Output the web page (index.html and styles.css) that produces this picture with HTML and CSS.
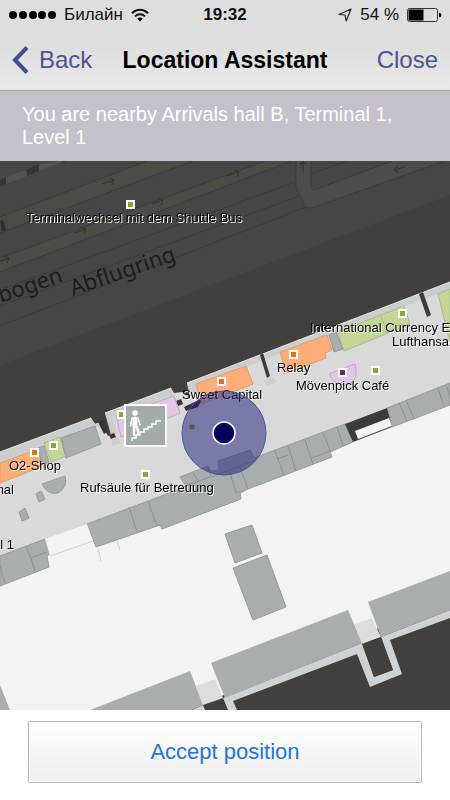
FILE: index.html
```html
<!DOCTYPE html>
<html lang="en">
<head>
  <meta charset="UTF-8">
  <title>Location Assistant</title>
  <meta name="viewport" content="width=device-width, initial-scale=1.0">
  <link rel="stylesheet" href="styles.css">
</head>
<body>
  <header class="header">
    <div class="status-bar">
      <div class="status-left">
        <svg class="signal" width="48" height="10" viewBox="0 0 48 10">
          <circle cx="5" cy="5" r="4"/>
          <circle cx="15" cy="5" r="4"/>
          <circle cx="25" cy="5" r="4"/>
          <circle cx="34" cy="5" r="4"/>
          <circle cx="44" cy="5" r="4"/>
        </svg>
        <span>Билайн</span>
        <svg class="wifi" width="18" height="14" viewBox="0 0 18 14">
          <path d="M1 5.2C5.5.6 12.5.6 17 5.2" fill="none" stroke="#111" stroke-width="2"/>
          <path d="M4 8.4C6.9 5.6 11.1 5.6 14 8.4" fill="none" stroke="#111" stroke-width="2"/>
          <path d="M6.2 10.6C7.9 9 10.1 9 11.800 10.6L9 13.4Z"/>
        </svg>
      </div>
      <div class="status-time">19:32</div>
      <div class="status-right">
        <svg width="14" height="14" viewBox="0 0 14 14">
          <path d="M13 1L1 6.5L7 7L8.2 13Z" fill="none" stroke="#222" stroke-width="1.2" stroke-linejoin="round"/>
        </svg>
        <span>54 %</span>
        <svg width="35" height="14" viewBox="0 0 35 14">
          <rect x="0.5" y="0.5" width="30" height="13" rx="2" fill="none" stroke="#333"/>
          <rect x="1.5" y="1.5" width="15" height="11"/>
          <path d="M32 4.5Q34.5 5 34.5 7T32 9.5Z"/>
        </svg>
      </div>
    </div>
    <nav class="nav-bar">
      <a class="nav-link" href="#back">
        <svg width="17" height="28" viewBox="0 0 17 28">
          <path d="M15 1.5L3 14L15 26.5" fill="none" stroke="#3f4f8f" stroke-width="4"/>
        </svg>
        Back
      </a>
      <h1>Location Assistant</h1>
      <a class="nav-link nav-close" href="#close">Close</a>
    </nav>
  </header>

  <p class="banner">You are nearby Arrivals hall B, Terminal 1, Level 1</p>

  <main class="map">
    <svg class="map-drawing" viewBox="0 161 450 549" preserveAspectRatio="xMidYMid slice">
      <!-- ground -->
      <rect y="161" width="450" height="549" fill="#42403d"/>
      <path d="M0 161H450V195L0 365Z" fill="#464646"/>

      <!-- roads -->
      <path class="lane" d="M0 217L147 161H193L0 233Z"/>
      <path class="lane" d="M0 258L265 161H292L0 272Z"/>
      <path d="M296 161V187L304 205Q307 209 312 208L445 161H392L314 190L311 187V161Z" fill="#4b4b4b"/>
      <g class="road-line">
        <path d="M0 217L147 161M0 233L193 161M0 258L265 161M0 272L292 161"/>
        <path d="M0 290L295 182M0 306L299 196M0 326L306 207"/>
        <path d="M296 161V187L304 205Q307 209 312 208L445 161"/>
        <path d="M311 161V187L314 190L392 161M311 174L347 161"/>
      </g>
      <path d="M-1 180L6 177V184L0 187ZM26 170L39 164V171L27 176ZM63 161H68L62 163Z" fill="#363636"/>
      <path d="M6 177L26 170L27 176L6 184ZM39 164L61 161L60 163L39 171Z" fill="#535353"/>
      <path d="M0 221L3 219L6 230L2 232Z" fill="#303030"/>
      <g class="arrow">
        <path d="M102 184L114 180M109 178L114 180L112 185"/>
        <path d="M152 204L163 200M158 198L163 200L161 205"/>
        <path d="M74 233L86 229M81 227L86 229L84 234"/>
        <path d="M-2 262L9 258M4 256L9 258L7 263"/>
        <path d="M227 176L239 172M234 170L239 172L237 177"/>
        <path d="M405 167L394 170M398 165L394 170L399 173"/>
        <path d="M303 172V161M300 165L303 161L307 165"/>
      </g>
      <g class="road-name">
        <text transform="translate(1 303) rotate(-19)">bogen</text>
        <text transform="translate(73 296) rotate(-19)">Abflugring</text>
      </g>

      <!-- apron -->
      <path d="M0 555L450 385V600L348 640L190 710H0Z" fill="#f3f3f3"/>

      <!-- terminal floor -->
      <path d="M0 452L91 418L95 424L100 422L108 436L112 434L105 413L171 388L174 393L182 392L190 398L187 383L450 282V400L0 572Z" fill="#d9d9d9"/>
      <path d="M0 452L91 418L95 424L100 422L103 431L97 426L0 462ZM105 413L171 388L178 412L173 415L170 396L113 417L117 434L111 435ZM187 383L450 282V289L196 386L200 394L191 398Z" fill="#cbcdce"/>
      <path d="M0 452L91 418M105 413L171 388M187 383L450 282" fill="none" stroke="#e0e1e1"/>

      <!-- passages and doors -->
      <path d="M98 422L104 419L109 431L104 434ZM109 435L114 433L116 437L111 439ZM176 401L181 399L183 404L178 406ZM184 407L203 398L198 407L186 411Z" fill="#363636"/>
      <path d="M260 355L263 353L270 376L267 378ZM419 294L423 292L431 315L427 317Z" fill="#3d3c3b"/>
      <path d="M111 440L118 437L121 443L113 446ZM264 380L273 377L277 382L267 386Z" fill="#ccd0d0"/>

      <!-- shops -->
      <g class="shop-orange">
        <path d="M0 463L38 449L43 466L0 483Z"/>
        <path d="M196 384L246 366L253 384L202 404Z"/>
        <path d="M280 352L327 335L332 350L325 353L326 358L286 373Z"/>
      </g>
      <g class="shop-green">
        <path d="M44 443L60 437L66 456L51 462Z"/>
        <path d="M337 332L404 306L410 324L344 351Z"/>
        <path d="M438 294L450 289V342Z"/>
        <path d="M381 316L387 333"/>
      </g>
      <g class="shop-violet">
        <path d="M116 416L174 396L180 413L121 437Z"/>
        <path d="M329 374L355 364Q359 378 350 384Q335 388 329 374Z"/>
      </g>
      <g class="room">
        <path d="M38 448L44 446L49 462L42 465ZM61 438L95 426L101 444L66 458Z"/>
        <path d="M329 335L336 332L343 349L334 352Z"/>
        <path d="M42 484L65 476Q68 487 58 493Q47 495 42 484ZM36 494L41 491L45 499L39 502ZM19 512L25 508L29 518L22 521Z"/>

        <!-- southern row -->
        <path d="M0 556L45 539L50 554L47 556L49 567L0 586Z"/>
        <path d="M87 524L180 489L191 483L186 486L180 477L208 466L211 471L219 470L218 461L250 450L254 458L345 424L353 442L330 452L332 457L248 489L240 493L241 499L162 529L160 525L96 547Z"/>
        <path d="M387 408L450 383V405L392 427Z"/>
        <path d="M225 534L252 525L262 553L235 563ZM233 568L267 555L286 607L253 620Z"/>
      </g>
      <g class="wall">
        <path d="M26 547L31 558L47 552M31 558L35 571M0 566L5 583"/>
        <path d="M129 507L137 532M148 501L157 526"/>
        <path d="M186 486L210 477M193 473L198 481M208 468L211 477L254 461M230 472L236 493L241 491M240 467L248 489"/>
        <path d="M275 451L284 475M288 446L296 471M305 440L313 464M323 433L331 452M337 427L343 446M277 459L288 455M312 458L330 451"/>
        <path d="M399 403L407 421M406 400L414 418M438 388L444 407M446 385L450 396"/>
      </g>
      <path d="M87 524L94 544L50 556L45 539Z" fill="#f3f3f3"/>
      <path d="M50 556L93 541M98 549L101 561M117 541L120 550" fill="none" stroke="#d0d0d0"/>
      <path d="M345 424L387 408L392 427L353 442Z" fill="#3d3c3b"/>
      <path d="M355 431L389 418L392 426L358 439Z" fill="#f3f3f3"/>

      <!-- lower buildings -->
      <path d="M0 685L10 710H0Z" fill="#a8aeae"/>
      <path d="M203 705L223 697L362 643L381 637L450 610V710H203Z" fill="#42403d"/>
      <path d="M192 710L203 705L205 710Z" fill="#cfd2d2"/>
      <path d="M223 698L362 643L374 677L393 670L381 637L450 610V618L390 640L402 674L370 687L357 654L233 701L237 710H228Z" fill="#cfd2d2"/>
      <path d="M90 710L190 671L203 705L192 710ZM211 663L348 610L362 643L225 698ZM368 602L450 571V610L381 637Z" fill="#a8aeae"/>
      <path d="M196 686L215 679L223 698L203 705ZM354 624L372 618L381 637L362 644Z" fill="#dcdddd"/>
      <path d="M362 644L381 637L393 670L374 677Z" fill="#42403d"/>

      <!-- stairs -->
      <rect x="125" y="405" width="41" height="41" fill="#a3abab" stroke="#fff" stroke-width="2"/>
      <g fill="none" stroke="#fff">
        <path d="M132 441V438H136V435H140V432H144V429H148V427H152V424H156V421H161" stroke-width="1.5"/>
        <circle cx="135" cy="413" r="2.700" fill="#fff" stroke="none"/>
        <path d="M135 419V425" stroke-width="5" stroke-linecap="round"/>
        <path d="M134 426V435M136 426L138 430V434" stroke-width="2.500" stroke-linecap="round"/>
        <path d="M132 418L130.500 426M138 418L140 425" stroke-width="1.500" stroke-linecap="round"/>
      </g>

      <!-- points of interest -->
      <g class="poi poi-green">
        <rect x="127" y="201" width="7" height="7"/>
        <rect x="399" y="310" width="7" height="7"/>
        <rect x="372" y="367" width="7" height="7"/>
        <path d="M118 411H124V418H118Z"/>
        <rect x="50" y="442" width="7" height="7"/>
        <rect x="142" y="471" width="7" height="7"/>
      </g>
      <rect x="189" y="424" width="6" height="6" fill="#7fae36" stroke="#d9e3c8"/>
      <g class="poi poi-orange">
        <rect x="290" y="351" width="7" height="7"/>
        <rect x="218" y="378" width="7" height="7"/>
        <rect x="31" y="449" width="7" height="7"/>
      </g>
      <rect class="poi poi-violet" x="339" y="369" width="7" height="7"/>

      <g class="poi-label">
        <text x="26" y="222">Terminalwechsel mit dem Shuttle Bus</text>
        <text x="310" y="332">International Currency Ex</text>
        <text x="392" y="346">Lufthansa</text>
        <text x="277" y="372">Relay</text>
        <text x="296" y="390">Mövenpick Café</text>
        <text x="182" y="399">Sweet Capital</text>
        <text x="9" y="470">O2-Shop</text>
        <text x="80" y="492">Rufsäule für Betreuung</text>
        <text x="14" y="494" text-anchor="end">nal</text>
        <text x="14" y="549" text-anchor="end">al 1</text>
      </g>

      <!-- current position -->
      <circle cx="224" cy="433" r="42" fill="#1c1c78" fill-opacity="0.5" stroke="#4c55a0"/>
      <circle cx="224" cy="433" r="11" fill="#00005c" stroke="#fff" stroke-width="1.5"/>
    </svg>
  </main>

  <footer class="footer">
    <button type="button" class="accept">Accept position</button>
  </footer>
</body>
</html>
```

FILE: styles.css
```css
* {
  box-sizing: border-box;
}

body {
  margin: 0;
  min-height: 100vh;
  display: flex;
  flex-direction: column;
  background: #fff;
  font-family: "Liberation Sans", Arial, sans-serif;
}

.header {
  background: linear-gradient(#dedede 50%, #e9e9e9);
  border-bottom: 1px solid #a3a2ab;
}

.status-bar {
  display: grid;
  grid-template-columns: 1fr auto 1fr;
  align-items: center;
  height: 30px;
  padding: 0 8px;
  font-size: 17px;
  color: #111;
}

.status-left,
.status-right {
  display: flex;
  align-items: center;
  gap: 8px;
}

.status-right {
  justify-content: flex-end;
}

.status-time {
  font-weight: bold;
}

.nav-bar {
  display: grid;
  grid-template-columns: 1fr auto 1fr;
  align-items: center;
  height: 60px;
  padding: 0 12px;
}

.nav-bar h1 {
  margin: 0;
  font-size: 23px;
  color: #000;
}

.nav-link {
  display: flex;
  align-items: center;
  gap: 10px;
  font-size: 24px;
  color: #4a5590;
  text-decoration: none;
}

.nav-close {
  justify-content: flex-end;
}

.banner {
  margin: 0;
  padding: 12px 22px;
  background: #c6c0cb;
  color: #fff;
  font-size: 20px;
  line-height: 23px;
}

.map {
  flex: 1;
  display: flex;
  min-height: 0;
  overflow: hidden;
}

.map-drawing {
  display: block;
  width: 100%;
}

.lane {
  fill: #4b4a43;
}

.road-line {
  fill: none;
  stroke: #3b3b3b;
}

.arrow {
  fill: none;
  stroke: #34332f;
}

.road-name {
  font-family: "Noto Sans", sans-serif;
  font-size: 22px;
  fill: #1c1c1c;
}

.shop-orange {
  fill: #fdae78;
  stroke: #e39a68;
}

.shop-green {
  fill: #c3d896;
  stroke: #a9b98a;
}

.shop-violet {
  fill: #e3c6e8;
  stroke: #c3a6ca;
}

.room {
  fill: #a8aeae;
  stroke: #959b9b;
}

.wall {
  fill: none;
  stroke: #8c9292;
}

.poi {
  stroke: #fff;
  stroke-width: 2px;
}

.poi-green {
  fill: #7fae36;
}

.poi-orange {
  fill: #e8701c;
}

.poi-violet {
  fill: #6d2585;
}

.poi-label {
  font-size: 13px;
  fill: #000;
  filter: drop-shadow(1px 1px 0 #fff);
}

.footer {
  padding: 11px 28px 17px;
}

.accept {
  display: block;
  width: 100%;
  height: 62px;
  border: 1px solid #b9b9bb;
  border-radius: 2px;
  background: linear-gradient(#fff, #eeeef0);
  box-shadow: inset 0 0 0 1px #fff;
  color: #1f75d8;
  font-family: inherit;
  font-size: 22px;
  cursor: pointer;
}
```
